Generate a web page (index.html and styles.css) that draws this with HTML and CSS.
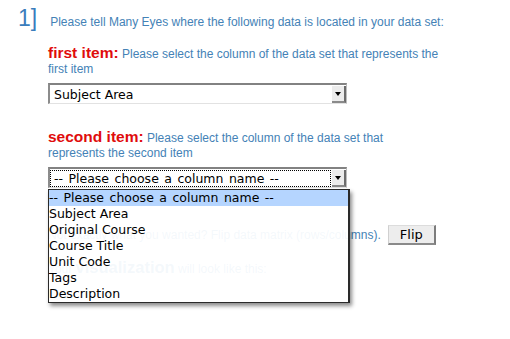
FILE: index.html
```html
<!DOCTYPE html>
<html lang="en">
<head>
  <meta charset="UTF-8">
  <title>Many Eyes - Describe data</title>
  <link rel="stylesheet" href="styles.css">
</head>
<body>
  <div class="step">
    <div class="step-head">
      <span class="step-num">1]</span>
      <span class="step-intro">Please tell Many Eyes where the following data is located in your data set:</span>
    </div>

    <div class="field">
      <p class="field-label"><strong>first item:</strong> Please select the column of the data set that represents the first item</p>
      <div class="select">
        <span class="select-value">Subject Area</span>
        <span class="select-arrow"></span>
      </div>
    </div>

    <div class="field">
      <p class="field-label"><strong>second item:</strong> Please select the column of the data set that represents the second item</p>
      <div class="select focused">
        <span class="select-value placeholder">-- Please choose a column name --</span>
        <span class="select-arrow"></span>
        <ul class="options">
          <li class="selected placeholder">-- Please choose a column name --</li>
          <li>Subject Area</li>
          <li>Original Course</li>
          <li>Course Title</li>
          <li>Unit Code</li>
          <li>Tags</li>
          <li>Description</li>
        </ul>
      </div>
    </div>

    <div class="flip-row">
      <span>Not exactly what you wanted? Flip data matrix (rows/columns).</span>
      <button class="btn" type="button">Flip</button>
    </div>

    <p class="preview">Your <strong>visualization</strong> will look like this:</p>
  </div>
</body>
</html>
```

FILE: styles.css
```css
:root {
  --blue: #4482b6;
  --red: #e00c0c;
  --ui-font: "DejaVu Sans", "Liberation Sans", sans-serif;
}

html, body { min-height: 100vh; }

body {
  margin: 0;
  background: #fff;
  color: var(--blue);
  font-family: "Liberation Sans", Arial, sans-serif;
}

.step { padding: 7px 0 0 18px; }

.step-head { display: flex; align-items: baseline; height: 22px; }
.step-num { font-size: 23px; line-height: 22px; color: #3a7dbc; }
.step-intro { font-size: 12px; margin-left: 13px; }

.field { margin-left: 30px; width: 392px; }
.field-label { margin: 16px 0 6px; font-size: 12px; line-height: 15px; }
.field-label strong { font-size: 15.5px; color: var(--red); }
.field + .field .field-label { margin-top: 25px; }

/* fake mac style select */
.select {
  position: relative;
  box-sizing: border-box;
  width: 299px;
  height: 21px;
  display: flex;
  align-items: center;
  background: #fff;
  border-style: solid;
  border-width: 2px 1px 1px 2px;
  border-color: #828282 #bdbdbd #e2e2e2 #8c8c8c;
  font-family: var(--ui-font);
  font-size: 12.5px;
  color: #000;
}
.select-value { flex: 1; padding-left: 4px; line-height: 17px; }
.select.focused .select-value { border: 1px dotted #000; margin: 0 1px 0 0; padding-left: 3px; line-height: 15px; }
.placeholder { word-spacing: 1.5px; }
.select-arrow {
  position: relative;
  box-sizing: border-box;
  width: 14px;
  height: 17px;
  background: #ececec;
  border-right: 2px solid #6c6c6c;
  border-bottom: 2px solid #8a8a8a;
}
.select-arrow::after {
  content: "";
  position: absolute;
  left: 3px;
  top: 6px;
  border-left: 3.5px solid transparent;
  border-right: 3.5px solid transparent;
  border-top: 4px solid #000;
}

/* open list */
.options {
  position: absolute;
  top: 20px;
  left: -2px;
  z-index: 2;
  width: 302px;
  box-sizing: border-box;
  margin: 0;
  padding: 0;
  list-style: none;
  background: rgba(255, 255, 255, 0.94);
  border: 1px solid #2a2a2a;
  border-right-width: 2px;
  box-shadow: 2px 3px 4px rgba(0, 0, 0, 0.45);
}
.options li { height: 16px; line-height: 16px; white-space: nowrap; }
.options li.selected { background: #b5d5ff; }

.flip-row { display: flex; align-items: center; margin: 37px 0 0 30px; font-size: 12px; }
.btn {
  margin-left: 7px;
  width: 48px;
  height: 20px;
  padding: 0;
  background: #ededed;
  border-style: solid;
  border-width: 1px 2px 2px 1px;
  border-color: #dcdcdc #7c7c7c #8a8a8a #d0d0d0;
  font-family: var(--ui-font);
  font-size: 13px;
  color: #000;
}

.preview { margin: 13px 0 0 30px; font-size: 12px; }
.preview strong { font-size: 16.5px; }
```
